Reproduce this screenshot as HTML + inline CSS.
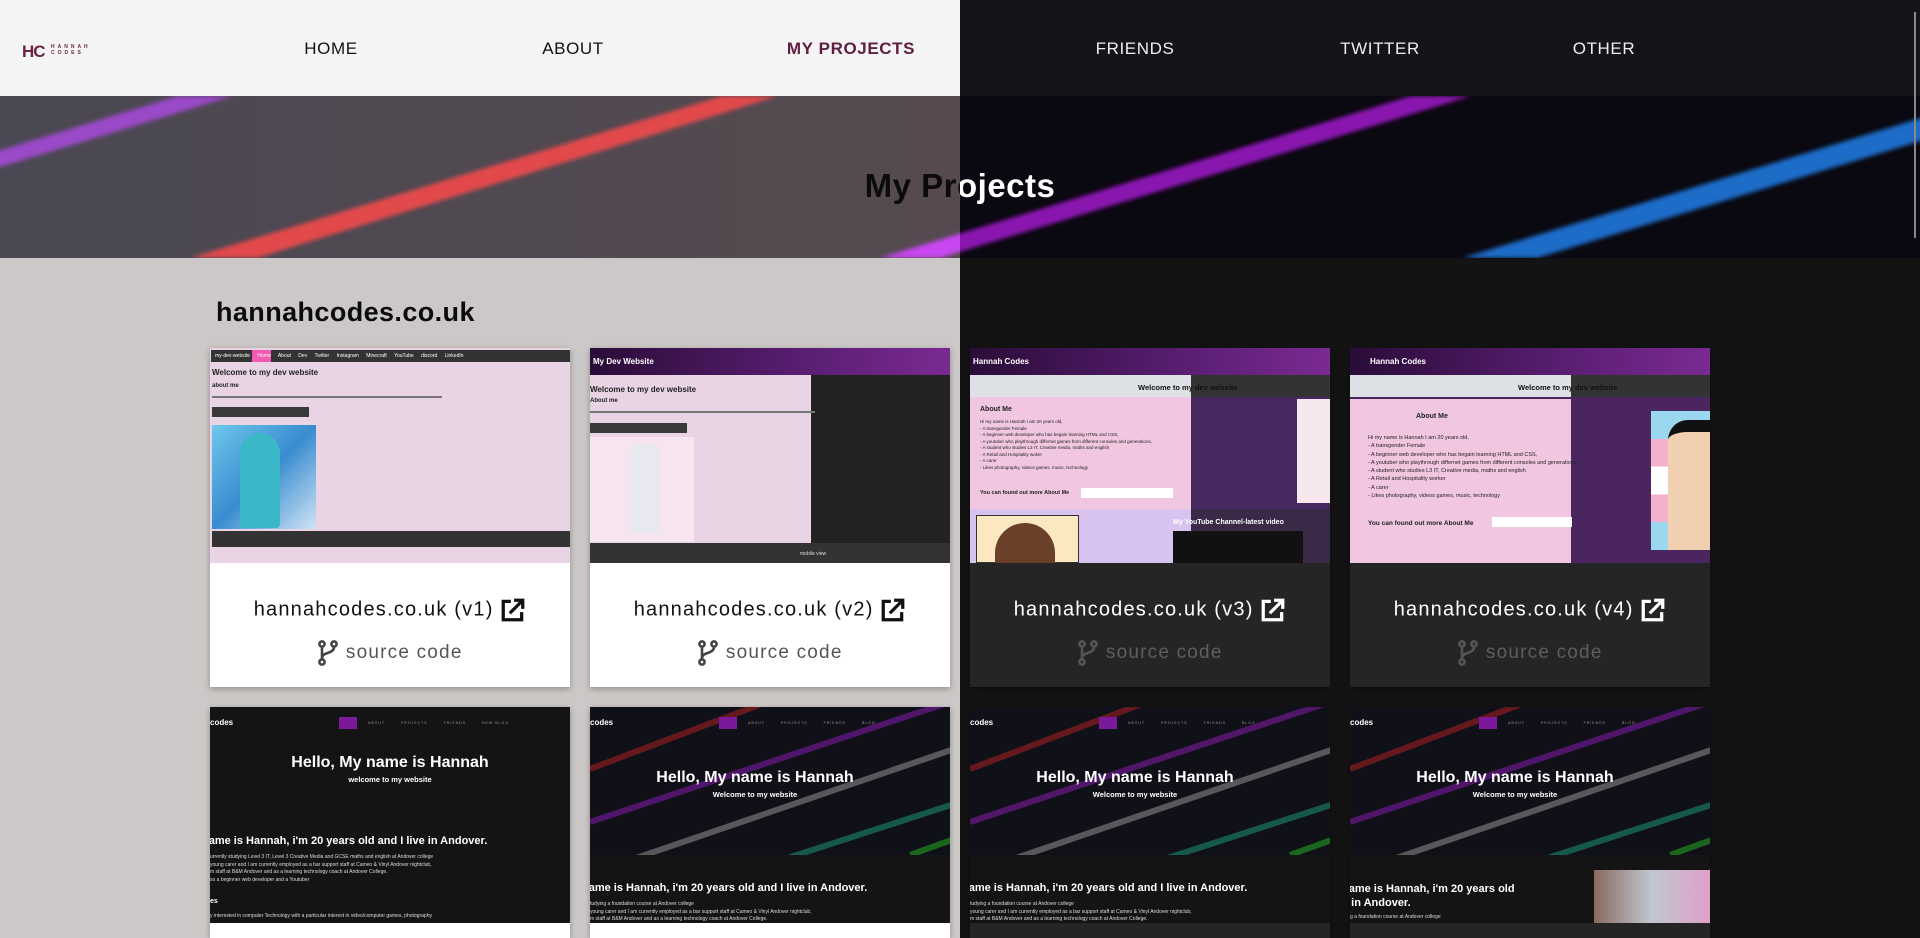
<!DOCTYPE html>
<html><head><meta charset="utf-8">
<style>
*{margin:0;padding:0;box-sizing:border-box}
html,body{width:1920px;height:938px;overflow:hidden}
body{position:relative;font-family:"Liberation Sans",sans-serif;background:#141414}
.abs{position:absolute}
.navL{left:0;top:0;width:960px;height:96px;background:#f4f4f4}
.navR{left:960px;top:0;width:960px;height:96px;background:#141518}
.nav{position:absolute;top:39px;font-size:17px;letter-spacing:0.6px;transform:translateX(-50%);white-space:nowrap}
.contL{left:0;top:258px;width:960px;height:680px;background:#ccc8c7}
.contR{left:960px;top:258px;width:960px;height:680px;background:#131313}
.title{top:167px;width:1920px;left:0;text-align:center;font-size:33px;font-weight:bold;letter-spacing:0.5px}
.card{position:absolute;width:360px;overflow:hidden;box-shadow:0 2px 6px rgba(0,0,0,.3)}
.thumb{position:absolute;left:0;top:0;width:360px;height:215px;overflow:hidden}
.bot{position:absolute;left:0;top:215px;width:360px;height:124px}
.light .bot{background:#fff}
.dark .bot{background:#252525}
.t1{position:absolute;top:34px;left:0;width:360px;text-align:center;font-size:20px;letter-spacing:1.2px}
.t2{position:absolute;top:77px;left:0;width:360px;text-align:center;font-size:19px;letter-spacing:1.2px}
.light .t1{color:#111}.light .t2{color:#555}
.dark .t1{color:#fff}.dark .t2{color:#5e5e5e}
.t1 svg,.t2 svg{vertical-align:middle}
</style></head><body>

<div class="abs navL"></div>
<div class="abs navR"></div>
<div class="abs" style="left:22px;top:42px;font-size:17px;font-weight:bold;color:#6b2346;letter-spacing:-1px">HC</div>
<div class="abs" style="left:51px;top:44px;font-size:5px;color:#6b2346;letter-spacing:3px;line-height:6px;font-weight:bold">HANNAH<br>CODES</div>
<div class="nav" style="left:331px;color:#111">HOME</div>
<div class="nav" style="left:573px;color:#111">ABOUT</div>
<div class="nav" style="left:851px;color:#5e1e42;font-weight:bold">MY PROJECTS</div>
<div class="nav" style="left:1135px;color:#eee">FRIENDS</div>
<div class="nav" style="left:1380px;color:#eee">TWITTER</div>
<div class="nav" style="left:1604px;color:#eee">OTHER</div>

<svg class="abs" style="left:0;top:96px" width="960" height="162">
<defs><filter id="b"><feGaussianBlur stdDeviation="2"/></filter>
<linearGradient id="hg" x1="0" x2="1"><stop offset="0" stop-color="#4a4852"/><stop offset="1" stop-color="#564a50"/></linearGradient></defs>
<rect width="960" height="162" fill="url(#hg)"/>
<g filter="url(#b)">
<polygon points="178,0 233,0 -298,162 -353,162" fill="#9a48c8"/>
<polygon points="722,0 778,0 257,162 190,162" fill="#e24a4c"/>
<polygon points="1411,0 1471,0 940,162 880,162" fill="#c846f2"/>
</g></svg>
<svg class="abs" style="left:960px;top:96px" width="960" height="162">
<defs><filter id="b2"><feGaussianBlur stdDeviation="2"/></filter></defs>
<rect width="960" height="162" fill="#0a0810"/>
<g filter="url(#b2)">
<polygon points="451,0 511,0 -20,162 -80,162" fill="#8a14b0"/>
<polygon points="1033,0 1108,0 577,162 502,162" fill="#1c6cc8"/>
</g></svg>
<div class="abs title" style="color:#0b0b0b;clip-path:inset(0 960px 0 0)">My Projects</div>
<div class="abs title" style="color:#fff;clip-path:inset(0 0 0 960px)">My Projects</div>
<div class="abs" style="left:1914px;top:12px;width:2px;height:226px;background:#888"></div>

<div class="abs contL"></div>
<div class="abs contR"></div>
<div class="abs" style="left:216px;top:297px;font-size:27px;font-weight:bold;color:#0b0b0b;letter-spacing:0.4px">hannahcodes.co.uk</div>

<div class="card light" style="left:210px;top:348px;height:339px">
 <div class="thumb" style="background:#e8d4e4">
  <div class="abs" style="left:1px;top:2px;width:359px;height:12px;background:#333"></div>
  <div class="abs" style="left:42px;top:2px;width:19px;height:12px;background:#f05ab0"></div>
  <div class="abs" style="left:5px;top:5px;font-size:5px;color:#fff;word-spacing:6px;white-space:nowrap">my-dev-website Home About Dev Twitter Instagram Minecraft YouTube discord LinkedIn</div>
  <div class="abs" style="left:2px;top:20px;font-size:8px;font-weight:bold;color:#222">Welcome to my dev website</div>
  <div class="abs" style="left:2px;top:35px;font-size:6px;font-weight:bold;color:#222">about me</div>
  <div class="abs" style="left:2px;top:48px;width:230px;height:2px;background:#777"></div>
  <div class="abs" style="left:2px;top:59px;width:97px;height:10px;background:#3a3a3a"></div>
  <div class="abs" style="left:2px;top:77px;width:104px;height:104px;background:linear-gradient(135deg,#6ec8ec,#3a8cd0 50%,#cfe4f4)"></div>
  <div class="abs" style="left:30px;top:85px;width:40px;height:95px;background:#3ab8c8;border-radius:20px 20px 4px 4px"></div>
  <div class="abs" style="left:2px;top:183px;width:358px;height:16px;background:#333"></div>
 </div>
 <div class="bot"><div class="t1">hannahcodes.co.uk (v1) <svg width="26" height="26" viewBox="0 0 24 24" fill="none" stroke="#111" stroke-width="3"><path d="M10 4H3v17h17v-7"/><path d="M9 15L21 3M13 3h8v8"/></svg></div>
 <div class="t2"><svg width="22" height="26" viewBox="0 0 22 26" fill="none" stroke="#444" stroke-width="2.6"><circle cx="5" cy="4" r="2.6"/><circle cx="17" cy="4" r="2.6"/><circle cx="5" cy="22" r="2.6"/><path d="M5 7v12M17 7c0 7-12 5-12 11"/></svg> source code</div></div>
</div>

<div class="card light" style="left:590px;top:348px;height:339px">
 <div class="thumb" style="background:#222">
  <div class="abs" style="left:0;top:0;width:360px;height:27px;background:linear-gradient(90deg,#2a0c38,#5a1e72 60%,#7a2a92)"></div>
  <div class="abs" style="left:3px;top:9px;font-size:8px;font-weight:bold;color:#fff">My Dev Website</div>
  <div class="abs" style="left:0;top:27px;width:221px;height:168px;background:#e8d4e4"></div>
  <div class="abs" style="left:0;top:37px;font-size:8px;font-weight:bold;color:#222">Welcome to my dev website</div>
  <div class="abs" style="left:0;top:50px;font-size:6px;font-weight:bold;color:#222">About me</div>
  <div class="abs" style="left:0;top:63px;width:225px;height:2px;background:#777"></div>
  <div class="abs" style="left:0;top:75px;width:97px;height:10px;background:#3a3a3a"></div>
  <div class="abs" style="left:0;top:89px;width:104px;height:105px;background:#f6e4ee"></div>
  <div class="abs" style="left:40px;top:95px;width:30px;height:90px;background:#e8e8f0;border-radius:14px 14px 4px 4px"></div>
  <div class="abs" style="left:0;top:195px;width:360px;height:20px;background:#333"></div>
  <div class="abs" style="left:210px;top:203px;font-size:5px;color:#ddd">mobile view</div>
 </div>
 <div class="bot"><div class="t1">hannahcodes.co.uk (v2) <svg width="26" height="26" viewBox="0 0 24 24" fill="none" stroke="#111" stroke-width="3"><path d="M10 4H3v17h17v-7"/><path d="M9 15L21 3M13 3h8v8"/></svg></div>
 <div class="t2"><svg width="22" height="26" viewBox="0 0 22 26" fill="none" stroke="#444" stroke-width="2.6"><circle cx="5" cy="4" r="2.6"/><circle cx="17" cy="4" r="2.6"/><circle cx="5" cy="22" r="2.6"/><path d="M5 7v12M17 7c0 7-12 5-12 11"/></svg> source code</div></div>
</div>

<div class="card dark" style="left:970px;top:348px;height:339px">
 <div class="thumb" style="background:#482860">
  <div class="abs" style="left:0;top:0;width:360px;height:27px;background:linear-gradient(90deg,#2a0c38,#5a1e72 60%,#7a2a92)"></div>
  <div class="abs" style="left:3px;top:9px;font-size:8px;font-weight:bold;color:#fff">Hannah Codes</div>
  <div class="abs" style="left:0;top:27px;width:221px;height:22px;background:#dde0e4"></div>
  <div class="abs" style="left:221px;top:27px;width:139px;height:22px;background:#333"></div>
  <div class="abs" style="left:168px;top:35px;font-size:7.5px;font-weight:bold;color:#111">Welcome to my dev website</div>
  <div class="abs" style="left:0;top:49px;width:221px;height:112px;background:#f0c6e0"></div>
  <div class="abs" style="left:10px;top:58px;font-size:7px;font-weight:bold;color:#222">About Me</div>
  <div class="abs" style="left:10px;top:71px;font-size:4.5px;line-height:6.5px;color:#222">Hi my name is Hannah I am 20 years old,<br>- A transgender Female<br>- A beginner web developer who has begain learning HTML and CSS,<br>- A youtuber who playthrough differnet games from different consoles and generations,<br>- A student who studies L3 IT, Creative media, maths and english<br>- A Retail and Hospitality woker<br>- A carer<br>- Likes photography, videos games, music, technology</div>
  <div class="abs" style="left:10px;top:142px;font-size:5.5px;font-weight:bold;color:#222">You can found out more About Me</div>
  <div class="abs" style="left:111px;top:140px;width:92px;height:10px;background:#fff"></div>
  <div class="abs" style="left:327px;top:51px;width:33px;height:104px;background:#f6e6ee"></div>
  <div class="abs" style="left:0;top:161px;width:221px;height:54px;background:#d8c2f0"></div>
  <div class="abs" style="left:221px;top:161px;width:139px;height:54px;background:#3a2a48"></div>
  <div class="abs" style="left:6px;top:167px;width:103px;height:48px;background:#fce8c0;border:1px solid #333"></div>
  <div class="abs" style="left:25px;top:175px;width:60px;height:40px;background:#6a4028;border-radius:30px 30px 0 0"></div>
  <div class="abs" style="left:203px;top:171px;font-size:7px;font-weight:bold;color:#fff">My YouTube Channel-latest video</div>
  <div class="abs" style="left:203px;top:183px;width:130px;height:32px;background:#111"></div>
 </div>
 <div class="bot"><div class="t1">hannahcodes.co.uk (v3) <svg width="26" height="26" viewBox="0 0 24 24" fill="none" stroke="#fff" stroke-width="3"><path d="M10 4H3v17h17v-7"/><path d="M9 15L21 3M13 3h8v8"/></svg></div>
 <div class="t2"><svg width="22" height="26" viewBox="0 0 22 26" fill="none" stroke="#555" stroke-width="2.6"><circle cx="5" cy="4" r="2.6"/><circle cx="17" cy="4" r="2.6"/><circle cx="5" cy="22" r="2.6"/><path d="M5 7v12M17 7c0 7-12 5-12 11"/></svg> source code</div></div>
</div>

<div class="card dark" style="left:1350px;top:348px;height:339px">
 <div class="thumb" style="background:#4a2560">
  <div class="abs" style="left:0;top:0;width:360px;height:27px;background:linear-gradient(90deg,#2a0c38,#5a1e72 60%,#7a2a92)"></div>
  <div class="abs" style="left:20px;top:9px;font-size:8px;font-weight:bold;color:#fff">Hannah Codes</div>
  <div class="abs" style="left:0;top:27px;width:221px;height:22px;background:#dde0e4"></div>
  <div class="abs" style="left:221px;top:27px;width:139px;height:22px;background:#333"></div>
  <div class="abs" style="left:168px;top:35px;font-size:7.5px;font-weight:bold;color:#111">Welcome to my dev website</div>
  <div class="abs" style="left:0;top:51px;width:221px;height:164px;background:#f0c6e0"></div>
  <div class="abs" style="left:66px;top:65px;font-size:7px;font-weight:bold;color:#222">About Me</div>
  <div class="abs" style="left:18px;top:86px;font-size:5.5px;line-height:8.3px;color:#222;white-space:nowrap">Hi my name is Hannah I am 20 years old,<br>- A transgender Female<br>- A beginner web developer who has begain learning HTML and CSS,<br>- A youtuber who playthrough differnet games from different consoles and generations,<br>- A student who studies L3 IT, Creative media, maths and english<br>- A Retail and Hospitality worker<br>- A carer<br>- Likes photography, videos games, music, technology</div>
  <div class="abs" style="left:18px;top:172px;font-size:6.5px;font-weight:bold;color:#222">You can found out more About Me</div>
  <div class="abs" style="left:142px;top:169px;width:80px;height:10px;background:#fff"></div>
  <div class="abs" style="left:301px;top:63px;width:59px;height:139px;background:linear-gradient(180deg,#9ad8f0 0 20%,#f4b0cc 20% 40%,#fff 40% 60%,#f4b0cc 60% 80%,#9ad8f0 80%)"></div>
  <div class="abs" style="left:318px;top:72px;width:42px;height:130px;background:#f0d0b0;border-radius:20px 0 0 0;border-top:12px solid #111"></div>
 </div>
 <div class="bot"><div class="t1">hannahcodes.co.uk (v4) <svg width="26" height="26" viewBox="0 0 24 24" fill="none" stroke="#fff" stroke-width="3"><path d="M10 4H3v17h17v-7"/><path d="M9 15L21 3M13 3h8v8"/></svg></div>
 <div class="t2"><svg width="22" height="26" viewBox="0 0 22 26" fill="none" stroke="#555" stroke-width="2.6"><circle cx="5" cy="4" r="2.6"/><circle cx="17" cy="4" r="2.6"/><circle cx="5" cy="22" r="2.6"/><path d="M5 7v12M17 7c0 7-12 5-12 11"/></svg> source code</div></div>
</div>

<div class="card light" style="left:210px;top:707px;height:231px">
 <div class="thumb" style="background:#141414;height:216px">
  <div class="abs" style="left:0;top:11px;font-size:8px;font-weight:bold;color:#fff">codes</div>
  <div class="abs" style="left:129px;top:10px;width:18px;height:12px;background:#7a1a9a"></div>
  <div class="abs" style="left:158px;top:14px;font-size:3.5px;color:#999;word-spacing:14px;letter-spacing:1px">ABOUT PROJECTS FRIENDS NEW-BLOG</div>
  <div class="abs" style="left:0;top:47px;width:360px;text-align:center;font-size:16px;font-weight:bold;color:#fff">Hello, My name is Hannah</div>
  <div class="abs" style="left:0;top:68px;width:360px;text-align:center;font-size:7.5px;font-weight:bold;color:#fff">welcome to my website</div>
  <div class="abs" style="left:-8px;top:128px;font-size:11px;font-weight:bold;color:#fff;white-space:nowrap">name is Hannah, i'm 20 years old and I live in Andover.</div>
  <div class="abs" style="left:0;top:147px;font-size:5px;line-height:7.5px;color:#ddd;white-space:nowrap">urrently studying Level 3 IT, Level 3 Creative Media and GCSE maths and english at Andover college<br>young carer and I am currently employed as a bar support staff at Cameo &amp; Vinyl Andover nightclub,<br>m staff at B&amp;M Andover and as a learning technology coach at Andover College.<br>so a beginner web developer and a Youtuber</div>
  <div class="abs" style="left:0;top:191px;font-size:7px;font-weight:bold;color:#fff">es</div>
  <div class="abs" style="left:0;top:206px;font-size:5px;color:#ddd;white-space:nowrap">y interested in computer Technology with a particular interest in video/computer games, photography</div>
 </div>
 <div class="bot" style="top:216px;height:15px"></div>
</div>

<div class="card light" style="left:590px;top:707px;height:231px">
 <div class="thumb" style="background:#141414;height:216px">
  <svg class="abs" style="left:0;top:0" width="360" height="148"><rect width="360" height="148" fill="#101018"/>
  <g stroke-width="6" opacity=".6"><line x1="0" y1="62" x2="190" y2="-10" stroke="#a02020"/><line x1="0" y1="115" x2="360" y2="-5" stroke="#7a1aa0"/><line x1="20" y1="160" x2="370" y2="40" stroke="#888"/><line x1="170" y1="160" x2="370" y2="95" stroke="#1a8a70"/><line x1="320" y1="148" x2="370" y2="130" stroke="#20a020"/></g></svg>
  <div class="abs" style="left:0;top:11px;font-size:8px;font-weight:bold;color:#fff">codes</div>
  <div class="abs" style="left:129px;top:10px;width:18px;height:12px;background:#7a1a9a"></div>
  <div class="abs" style="left:158px;top:14px;font-size:3.5px;color:#999;word-spacing:14px;letter-spacing:1px">ABOUT PROJECTS FRIENDS BLOG</div>
  <div class="abs" style="left:0;top:62px;width:330px;text-align:center;font-size:16px;font-weight:bold;color:#fff">Hello, My name is Hannah</div>
  <div class="abs" style="left:0;top:83px;width:330px;text-align:center;font-size:7.5px;font-weight:bold;color:#fff">Welcome to my website</div>
  <div class="abs" style="left:-8px;top:175px;font-size:11px;font-weight:bold;color:#fff;white-space:nowrap">name is Hannah, i'm 20 years old and I live in Andover.</div>
  <div class="abs" style="left:0;top:194px;font-size:5px;line-height:7.5px;color:#ddd;white-space:nowrap">tudying a foundation course at Andover college<br>young carer and I am currently employed as a bar support staff at Cameo &amp; Vinyl Andover nightclub,<br>m staff at B&amp;M Andover and as a learning technology coach at Andover College.</div>
 </div>
 <div class="bot" style="top:216px;height:15px"></div>
</div>

<div class="card dark" style="left:970px;top:707px;height:231px">
 <div class="thumb" style="background:#141414;height:216px">
  <svg class="abs" style="left:0;top:0" width="360" height="148"><rect width="360" height="148" fill="#101018"/>
  <g stroke-width="6" opacity=".6"><line x1="0" y1="62" x2="190" y2="-10" stroke="#a02020"/><line x1="0" y1="115" x2="360" y2="-5" stroke="#7a1aa0"/><line x1="20" y1="160" x2="370" y2="40" stroke="#888"/><line x1="170" y1="160" x2="370" y2="95" stroke="#1a8a70"/><line x1="320" y1="148" x2="370" y2="130" stroke="#20a020"/></g></svg>
  <div class="abs" style="left:0;top:11px;font-size:8px;font-weight:bold;color:#fff">codes</div>
  <div class="abs" style="left:129px;top:10px;width:18px;height:12px;background:#7a1a9a"></div>
  <div class="abs" style="left:158px;top:14px;font-size:3.5px;color:#999;word-spacing:14px;letter-spacing:1px">ABOUT PROJECTS FRIENDS BLOG</div>
  <div class="abs" style="left:0;top:62px;width:330px;text-align:center;font-size:16px;font-weight:bold;color:#fff">Hello, My name is Hannah</div>
  <div class="abs" style="left:0;top:83px;width:330px;text-align:center;font-size:7.5px;font-weight:bold;color:#fff">Welcome to my website</div>
  <div class="abs" style="left:-8px;top:175px;font-size:11px;font-weight:bold;color:#fff;white-space:nowrap">name is Hannah, i'm 20 years old and I live in Andover.</div>
  <div class="abs" style="left:0;top:194px;font-size:5px;line-height:7.5px;color:#ddd;white-space:nowrap">tudying a foundation course at Andover college<br>young carer and I am currently employed as a bar support staff at Cameo &amp; Vinyl Andover nightclub,<br>m staff at B&amp;M Andover and as a learning technology coach at Andover College.</div>
 </div>
 <div class="bot" style="top:216px;height:15px"></div>
</div>

<div class="card dark" style="left:1350px;top:707px;height:231px">
 <div class="thumb" style="background:#141414;height:216px">
  <svg class="abs" style="left:0;top:0" width="360" height="148"><rect width="360" height="148" fill="#101018"/>
  <g stroke-width="6" opacity=".6"><line x1="0" y1="62" x2="190" y2="-10" stroke="#a02020"/><line x1="0" y1="115" x2="360" y2="-5" stroke="#7a1aa0"/><line x1="20" y1="160" x2="370" y2="40" stroke="#888"/><line x1="170" y1="160" x2="370" y2="95" stroke="#1a8a70"/><line x1="320" y1="148" x2="370" y2="130" stroke="#20a020"/></g></svg>
  <div class="abs" style="left:0;top:11px;font-size:8px;font-weight:bold;color:#fff">codes</div>
  <div class="abs" style="left:129px;top:10px;width:18px;height:12px;background:#7a1a9a"></div>
  <div class="abs" style="left:158px;top:14px;font-size:3.5px;color:#999;word-spacing:14px;letter-spacing:1px">ABOUT PROJECTS FRIENDS BLOG</div>
  <div class="abs" style="left:0;top:62px;width:330px;text-align:center;font-size:16px;font-weight:bold;color:#fff">Hello, My name is Hannah</div>
  <div class="abs" style="left:0;top:83px;width:330px;text-align:center;font-size:7.5px;font-weight:bold;color:#fff">Welcome to my website</div>
  <div class="abs" style="left:-8px;top:175px;font-size:11px;font-weight:bold;color:#fff;line-height:14px;white-space:nowrap">name is Hannah, i'm 20 years old<br>e in Andover.</div>
  <div class="abs" style="left:0;top:207px;font-size:5px;color:#ddd;white-space:nowrap">g a foundation course at Andover college</div>
  <div class="abs" style="left:244px;top:163px;width:116px;height:53px;background:linear-gradient(90deg,#8a6a60,#c0c8d0 50%,#e0a0c8)"></div>
 </div>
 <div class="bot" style="top:216px;height:15px"></div>
</div>

</body></html>
